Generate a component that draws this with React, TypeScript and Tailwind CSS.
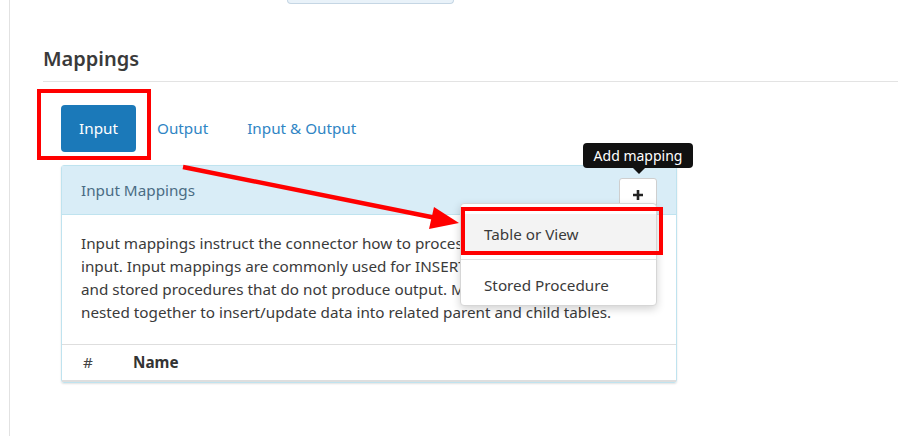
import React from "react";

const font = { fontFamily: '"Noto Sans", "Open Sans", Arial, sans-serif' };

export default function App() {
  return (
    <div className="relative w-[898px] h-[436px] overflow-hidden bg-white text-[#333]" style={font}>
      <div className="ml-[9px] h-full border-l border-[#e2e2e2] pl-[33px]">
        {/* cut-off field at the top */}
        <div className="ml-[244px] w-[167px] h-[4px] rounded-b-[4px] border border-t-0 border-[#c5d6e4] bg-[#e9f2f9]" />

        <h2 className="mt-[41px] text-[20px] leading-[28px] font-semibold text-[#3a3a3a]">Mappings</h2>
        <div className="mt-[8px] border-t border-[#e3e3e3]" />

        {/* tabs */}
        <div className="mt-[23px] ml-[18px] flex items-center text-[15.25px]">
          <button className="h-[47px] w-[75px] rounded-[4px] bg-[#1b79b9] text-white">Input</button>
          <span className="px-[21px] text-[#2f85c4]">Output</span>
          <span className="px-[18px] text-[#2f85c4]">Input &amp; Output</span>
        </div>

        {/* panel */}
        <div className="mt-[13px] ml-[18px] w-[616px] rounded-[3px] border border-[#bfe3ef] shadow-[0_1px_2px_rgba(0,0,0,0.12)]">
          <div className="h-[49px] flex items-center justify-between pl-[19px] pr-[19px] bg-[#d9edf7] border-b border-[#bfe3ef]">
            <span className="text-[15.25px] text-[#4a6c84]">Input Mappings</span>
            <button className="mt-[12px] self-start w-[38px] h-[34px] flex items-center justify-center rounded-[3px] border border-[#cfcfcf] bg-white">
              <svg width="12" height="12" viewBox="0 0 12 12">
                <path d="M6 1v10M1 6h10" stroke="#222" strokeWidth="2.6" />
              </svg>
            </button>
          </div>
          <div className="px-[19px] pt-[17px] pb-[20px] text-[15.25px] leading-[23px] text-[#3a3a3a]">
            Input mappings instruct the connector how to process the data
            <br />
            input. Input mappings are commonly used for INSERT, UPDATE statements
            <br />
            and stored procedures that do not produce output. Multiple mappings can be
            <br />
            nested together to insert/update data into related parent and child tables.
          </div>
          <div className="h-[38px] flex items-center border-t border-b-2 border-[#dedede] text-[15.25px]">
            <span className="pl-[21px] w-[71px] text-[#444]">#</span>
            <span className="font-bold text-[#333]">Name</span>
          </div>
        </div>
      </div>

      {/* tooltip */}
      <div className="absolute left-[583px] top-[143px] w-[110px] h-[25px] rounded-[4px] bg-[#111] text-white text-[14px] flex items-center justify-center">
        Add mapping
        <div className="absolute left-[50px] top-[25px] w-0 h-0 border-l-[6px] border-r-[6px] border-t-[6px] border-l-transparent border-r-transparent border-t-[#111]" />
      </div>

      {/* dropdown */}
      <div className="absolute left-[460px] top-[203px] w-[197px] h-[103px] rounded-[4px] border border-[#d6d6d6] bg-white shadow-[0_3px_8px_rgba(0,0,0,0.18)] pt-[10px] text-[15.25px] text-[#3a3a3a]">
        <div className="h-[40px] flex items-center pl-[23px] bg-[#f3f3f3]">Table or View</div>
        <div className="mt-[5px] mb-[5px] border-t border-[#e2e2e2]" />
        <div className="h-[40px] flex items-center pl-[23px]">Stored Procedure</div>
      </div>

      {/* annotations */}
      <div className="absolute left-[37px] top-[89px] w-[114px] h-[71px] border-[4px] border-[#ff0000]" />
      <div className="absolute left-[461px] top-[207px] w-[202px] h-[48px] border-[4px] border-[#ff0000]" />
      <svg className="absolute left-0 top-0 pointer-events-none" width="898" height="436">
        <line x1="183" y1="167" x2="436" y2="218" stroke="#ff0000" strokeWidth="4.5" />
        <polygon points="459,223 434,207 429,229" fill="#ff0000" />
      </svg>
    </div>
  );
}
